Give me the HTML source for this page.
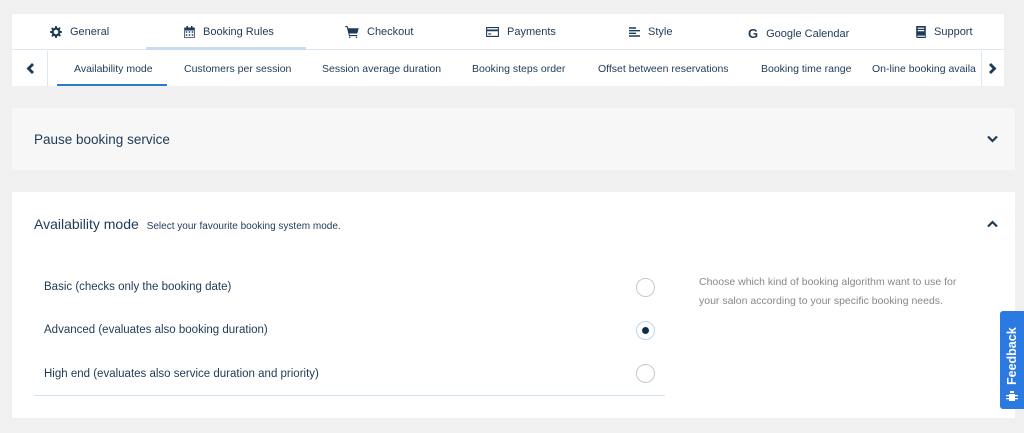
<!DOCTYPE html>
<html><head><style>
*{margin:0;padding:0;box-sizing:border-box}
body{width:1024px;height:433px;background:#f0f0f0;font-family:"Liberation Sans",sans-serif;color:#1e3a56;position:relative;overflow:hidden}
.nav{position:absolute;left:12px;top:14px;width:992px;height:72px;background:#fff}
.r1{position:absolute;top:0;left:0;width:992px;height:36px;border-bottom:1px solid #dbe7f3}
.t{position:absolute;top:12px;font-size:11px;display:flex;align-items:center;gap:8px}
.t svg{fill:#1e3a56}
.ul{position:absolute;left:134px;top:33px;width:160px;height:3px;background:#c9dcf0}
.r2{position:absolute;top:37px;left:0;width:992px;height:35px}
.s{position:absolute;top:12px;font-size:10.5px;white-space:nowrap}
.la{position:absolute;left:0;top:0;width:36px;height:35px;border-right:1px solid #dbe7f3}
.ra{position:absolute;left:969px;top:0;width:23px;height:35px;border-left:1px solid #dbe7f3;background:#fff}
.act{position:absolute;left:45px;top:33px;width:110px;height:2px;background:#2a7bc8}
.p1{position:absolute;left:12px;top:108px;width:1003px;height:62px;background:#f7f7f7}
.p2{position:absolute;left:12px;top:192px;width:1003px;height:226px;background:#fff}
.opt{position:absolute;left:32px;font-size:11.5px}
.rad{position:absolute;left:624px;width:19px;height:19px;border:1.5px solid #c8c8c8;border-radius:50%;background:#fff}
.fb{position:absolute;left:1000px;top:311px;width:24px;height:98px;background:#2a7ae2;border-radius:3px 0 0 3px}
</style></head><body>
<div class="nav">
 <div class="r1">
  <div class="t" style="left:38px"><svg width="12" height="12" viewBox="0 0 16 16"><path d="M7 0h2l.4 2.2 1.5.6 1.9-1.3 1.4 1.4-1.3 1.9.6 1.5L16 7v2l-2.2.4-.6 1.5 1.3 1.9-1.4 1.4-1.9-1.3-1.5.6L9 16H7l-.4-2.2-1.5-.6-1.9 1.3-1.4-1.4 1.3-1.9-.6-1.5L0 9V7l2.2-.4.6-1.5L1.5 3.2l1.4-1.4 1.9 1.3 1.5-.6zM8 5a3 3 0 100 6 3 3 0 000-6z"/></svg>General</div>
  <div class="t" style="left:172px"><svg width="11" height="12" viewBox="0 0 14 16"><path d="M3 0h2v2h4V0h2v2h3v14H0V2h3zM1 6v9h12V6zm1 1h2v2H2zm4 0h2v2H6zm4 0h2v2h-2zM2 11h2v2H2zm4 0h2v2H6zm4 0h2v2h-2z"/></svg>Booking Rules</div>
  <div class="t" style="left:333px"><svg width="14" height="12" viewBox="0 0 18 16"><path d="M0 0h3l1 3h14l-2 7H5.5l.5 2h10v1.5H5L2 1.5H0zM6 14a1 1 0 110 2 1 1 0 010-2zm9 0a1 1 0 110 2 1 1 0 010-2z"/></svg>Checkout</div>
  <div class="t" style="left:474px"><svg width="13" height="10" viewBox="0 0 18 14"><path d="M0 0h18v14H0zm1.5 1.5v2h15v-2zm0 4.5v6.5h15V6zM3 9h4v1.5H3z"/></svg>Payments</div>
  <div class="t" style="left:617px"><svg width="11" height="10" viewBox="0 0 14 12"><path d="M0 0h9v1.8H0zm0 3.4h14v1.8H0zm0 3.4h9v1.8H0zm0 3.4h14V12H0z"/></svg>Style</div>
  <div class="t" style="left:736px"><b style="font-size:13px">G</b>Google Calendar</div>
  <div class="t" style="left:904px"><svg width="10" height="12" viewBox="0 0 12 15"><path d="M0 0h12v15H1.5A1.5 1.5 0 010 13.5zm2 2v1.5h8V2zm0 3v1.5h8V5zM1.5 12v1.5H11V12z"/></svg>Support</div>
  <div class="ul"></div>
 </div>
 <div class="r2">
  <div class="la"><svg style="position:absolute;left:14px;top:12px" width="8" height="11" viewBox="0 0 8 11"><path d="M6 0l2 2-3.5 3.5L8 9l-2 2L.5 5.5z" fill="#1e3a56"/></svg></div>
  <div class="s" style="left:62px">Availability mode</div>
  <div class="s" style="left:172px">Customers per session</div>
  <div class="s" style="left:310px">Session average duration</div>
  <div class="s" style="left:460px">Booking steps order</div>
  <div class="s" style="left:586px">Offset between reservations</div>
  <div class="s" style="left:749px">Booking time range</div>
  <div class="s" style="left:860px">On-line booking availa</div>
  <div class="ra"><svg style="position:absolute;left:7px;top:12px" width="8" height="11" viewBox="0 0 8 11"><path d="M2 0L0 2l3.5 3.5L0 9l2 2 5.5-5.5z" fill="#1e3a56"/></svg></div>
  <div class="act"></div>
 </div>
</div>
<div class="p1">
 <div style="position:absolute;left:22px;top:24px;font-size:13.5px">Pause booking service</div>
 <svg style="position:absolute;left:975px;top:27px" width="11" height="8" viewBox="0 0 11 8"><path d="M1 1.5l4.5 4.5L10 1.5" stroke="#1e3a56" stroke-width="2.2" fill="none"/></svg>
</div>
<div class="p2">
 <div style="position:absolute;left:22px;top:24px;font-size:14px">Availability mode <span style="font-size:10px;margin-left:4px">Select your favourite booking system mode.</span></div>
 <svg style="position:absolute;left:975px;top:28px" width="11" height="8" viewBox="0 0 11 8"><path d="M1 6.5L5.5 2 10 6.5" stroke="#1e3a56" stroke-width="2.2" fill="none"/></svg>
 <div class="opt" style="top:89px">Basic (checks only the booking date)</div>
 <div class="opt" style="top:132px">Advanced (evaluates also booking duration)</div>
 <div class="opt" style="top:176px">High end (evaluates also service duration and priority)</div>
 <div class="rad" style="top:86px"></div>
 <div class="rad" style="top:129px;border-color:#bcd6f0"><div style="position:absolute;left:4.5px;top:4.5px;width:7px;height:7px;border-radius:50%;background:#0f2c4a"></div></div>
 <div class="rad" style="top:172px"></div>
 <div style="position:absolute;left:22px;top:203px;width:631px;height:1px;background:#cfe2f5"></div>
 <div style="position:absolute;left:687px;top:81px;width:265px;font-size:10.5px;line-height:19px;color:#888">Choose which kind of booking algorithm want to use for your salon according to your specific booking needs.</div>
</div>
<div class="fb"><div style="position:absolute;transform:rotate(-90deg);transform-origin:0 0;color:#fff;font-size:12.5px;font-weight:bold;white-space:nowrap;top:74px;left:5px">Feedback</div>
<svg style="position:absolute;left:6px;top:79px" width="12" height="12" viewBox="0 0 12 12"><path d="M4 1h4v2H4zM3 4h6v7H3zM0 5h3v1.2H0zm9 0h3v1.2H9zM0 8h3v1.2H0zm9 0h3v1.2H9z" fill="#fff"/></svg></div>
</body></html>
